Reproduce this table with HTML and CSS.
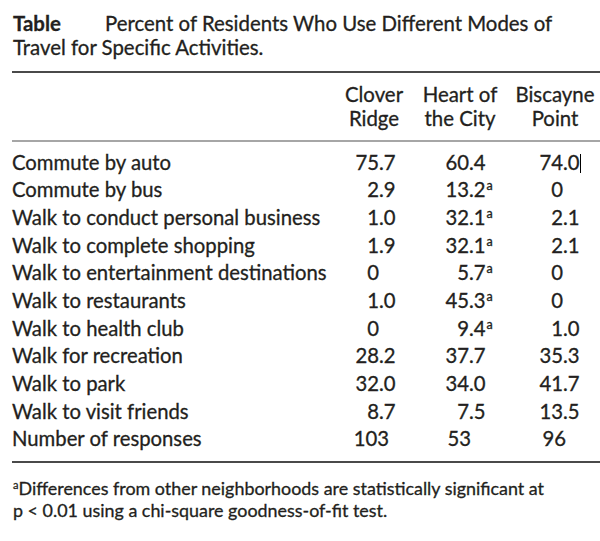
FILE: index.html
```html
<!DOCTYPE html>
<html lang="en">
<head>
<meta charset="utf-8">
<title>Table</title>
<link rel="stylesheet" href="styles.css">
</head>
<body>
<div class="wrap">
  <p class="title"><span class="lbl">Table</span>Percent of Residents Who Use Different Modes of<br>Travel for Specific Activities.</p>

  <div class="head">
    <div></div>
    <div class="hc">Clover<br>Ridge</div>
    <div class="hc">Heart of<br>the City</div>
    <div class="hc">Biscayne<br>Point</div>
  </div>

  <div class="body">
    <div class="row"><span class="name">Commute by auto</span><span class="n c1"><span class="i">75</span><span class="f">.7</span></span><span class="n c2"><span class="i">60</span><span class="f">.4</span></span><span class="n c3"><span class="i">74</span><span class="f">.0<span class="caret"></span></span></span></div>
    <div class="row"><span class="name">Commute by bus</span><span class="n c1"><span class="i">2</span><span class="f">.9</span></span><span class="n c2"><span class="i">13</span><span class="f">.2<sup class="s">a</sup></span></span><span class="n c3"><span class="i">0</span><span class="f"></span></span></div>
    <div class="row"><span class="name">Walk to conduct personal business</span><span class="n c1"><span class="i">1</span><span class="f">.0</span></span><span class="n c2"><span class="i">32</span><span class="f">.1<sup class="s">a</sup></span></span><span class="n c3"><span class="i">2</span><span class="f">.1</span></span></div>
    <div class="row"><span class="name">Walk to complete shopping</span><span class="n c1"><span class="i">1</span><span class="f">.9</span></span><span class="n c2"><span class="i">32</span><span class="f">.1<sup class="s">a</sup></span></span><span class="n c3"><span class="i">2</span><span class="f">.1</span></span></div>
    <div class="row"><span class="name">Walk to entertainment destinations</span><span class="n c1"><span class="i">0</span><span class="f"></span></span><span class="n c2"><span class="i">5</span><span class="f">.7<sup class="s">a</sup></span></span><span class="n c3"><span class="i">0</span><span class="f"></span></span></div>
    <div class="row"><span class="name">Walk to restaurants</span><span class="n c1"><span class="i">1</span><span class="f">.0</span></span><span class="n c2"><span class="i">45</span><span class="f">.3<sup class="s">a</sup></span></span><span class="n c3"><span class="i">0</span><span class="f"></span></span></div>
    <div class="row"><span class="name">Walk to health club</span><span class="n c1"><span class="i">0</span><span class="f"></span></span><span class="n c2"><span class="i">9</span><span class="f">.4<sup class="s">a</sup></span></span><span class="n c3"><span class="i">1</span><span class="f">.0</span></span></div>
    <div class="row"><span class="name">Walk for recreation</span><span class="n c1"><span class="i">28</span><span class="f">.2</span></span><span class="n c2"><span class="i">37</span><span class="f">.7</span></span><span class="n c3"><span class="i">35</span><span class="f">.3</span></span></div>
    <div class="row"><span class="name">Walk to park</span><span class="n c1"><span class="i">32</span><span class="f">.0</span></span><span class="n c2"><span class="i">34</span><span class="f">.0</span></span><span class="n c3"><span class="i">41</span><span class="f">.7</span></span></div>
    <div class="row"><span class="name">Walk to visit friends</span><span class="n c1"><span class="i">8</span><span class="f">.7</span></span><span class="n c2"><span class="i">7</span><span class="f">.5</span></span><span class="n c3"><span class="i">13</span><span class="f">.5</span></span></div>
    <div class="row total"><span class="name">Number of responses</span><span class="n c1"><span class="i">103</span><span class="f"></span></span><span class="n c2"><span class="i">53</span><span class="f"></span></span><span class="n c3"><span class="i">96</span><span class="f"></span></span></div>
  </div>

  <p class="note"><sup class="fs">a</sup>Differences from other neighborhoods are statistically significant at<br>p &lt; 0.01 using a chi-square goodness-of-fit test.</p>
</div>
</body>
</html>
```

FILE: styles.css
```css
html, body {
  margin: 0;
  padding: 0;
  background: #ffffff;
}

body {
  font-family: "Lato", "Open Sans", sans-serif;
  color: #231f20;
  -webkit-text-stroke: 0.3px #231f20;
}

.wrap {
  margin-left: 12px;
  width: 588px;
}

.title {
  margin: 0;
  padding-top: 11px;
  padding-left: 1px;
  font-size: 20.4px;
  line-height: 24px;
}

.title .lbl {
  font-weight: 700;
  display: inline-block;
  width: 92px;
}

.head {
  margin-top: 12px;
  border-top: 2px solid #4a4a4a;
  border-bottom: 2px solid #a6a6a6;
  padding: 9px 0 10px;
  display: grid;
  grid-template-columns: 1fr 72px 100px 90px;
  font-size: 20.4px;
  line-height: 24px;
}

.hc {
  text-align: center;
}

.body {
  padding: 6.5px 0 7.8px;
  border-bottom: 2px solid #4a4a4a;
  font-size: 20.3px;
}

.row {
  display: grid;
  grid-template-columns: 1fr 72px 100px 90px;
  line-height: 27.7px;
  height: 27.7px;
}

.name {
  white-space: nowrap;
}

.n {
  display: flex;
  white-space: nowrap;
}

.n .i {
  flex: none;
  text-align: right;
}

.n .f {
  flex: none;
}

.c1 .i { width: 41px; }
.c2 .i { width: 59px; }
.c3 .i { width: 53px; }

.total .c1 .i { width: 51px; }
.total .c2 .i { width: 61px; }
.total .c3 .i { width: 56px; }

.s {
  font-size: 12.5px;
  line-height: 0;
  vertical-align: 7px;
  margin-left: 1px;
}

.caret {
  display: inline-block;
  width: 1px;
  height: 19px;
  background: #000;
  vertical-align: -3px;
  margin-left: 0;
}

.note {
  margin: 14.4px 0 0;
  padding-left: 1px;
  font-size: 17.9px;
  line-height: 22px;
}

.fs {
  font-size: 11px;
  line-height: 0;
  vertical-align: 6px;
}
```
